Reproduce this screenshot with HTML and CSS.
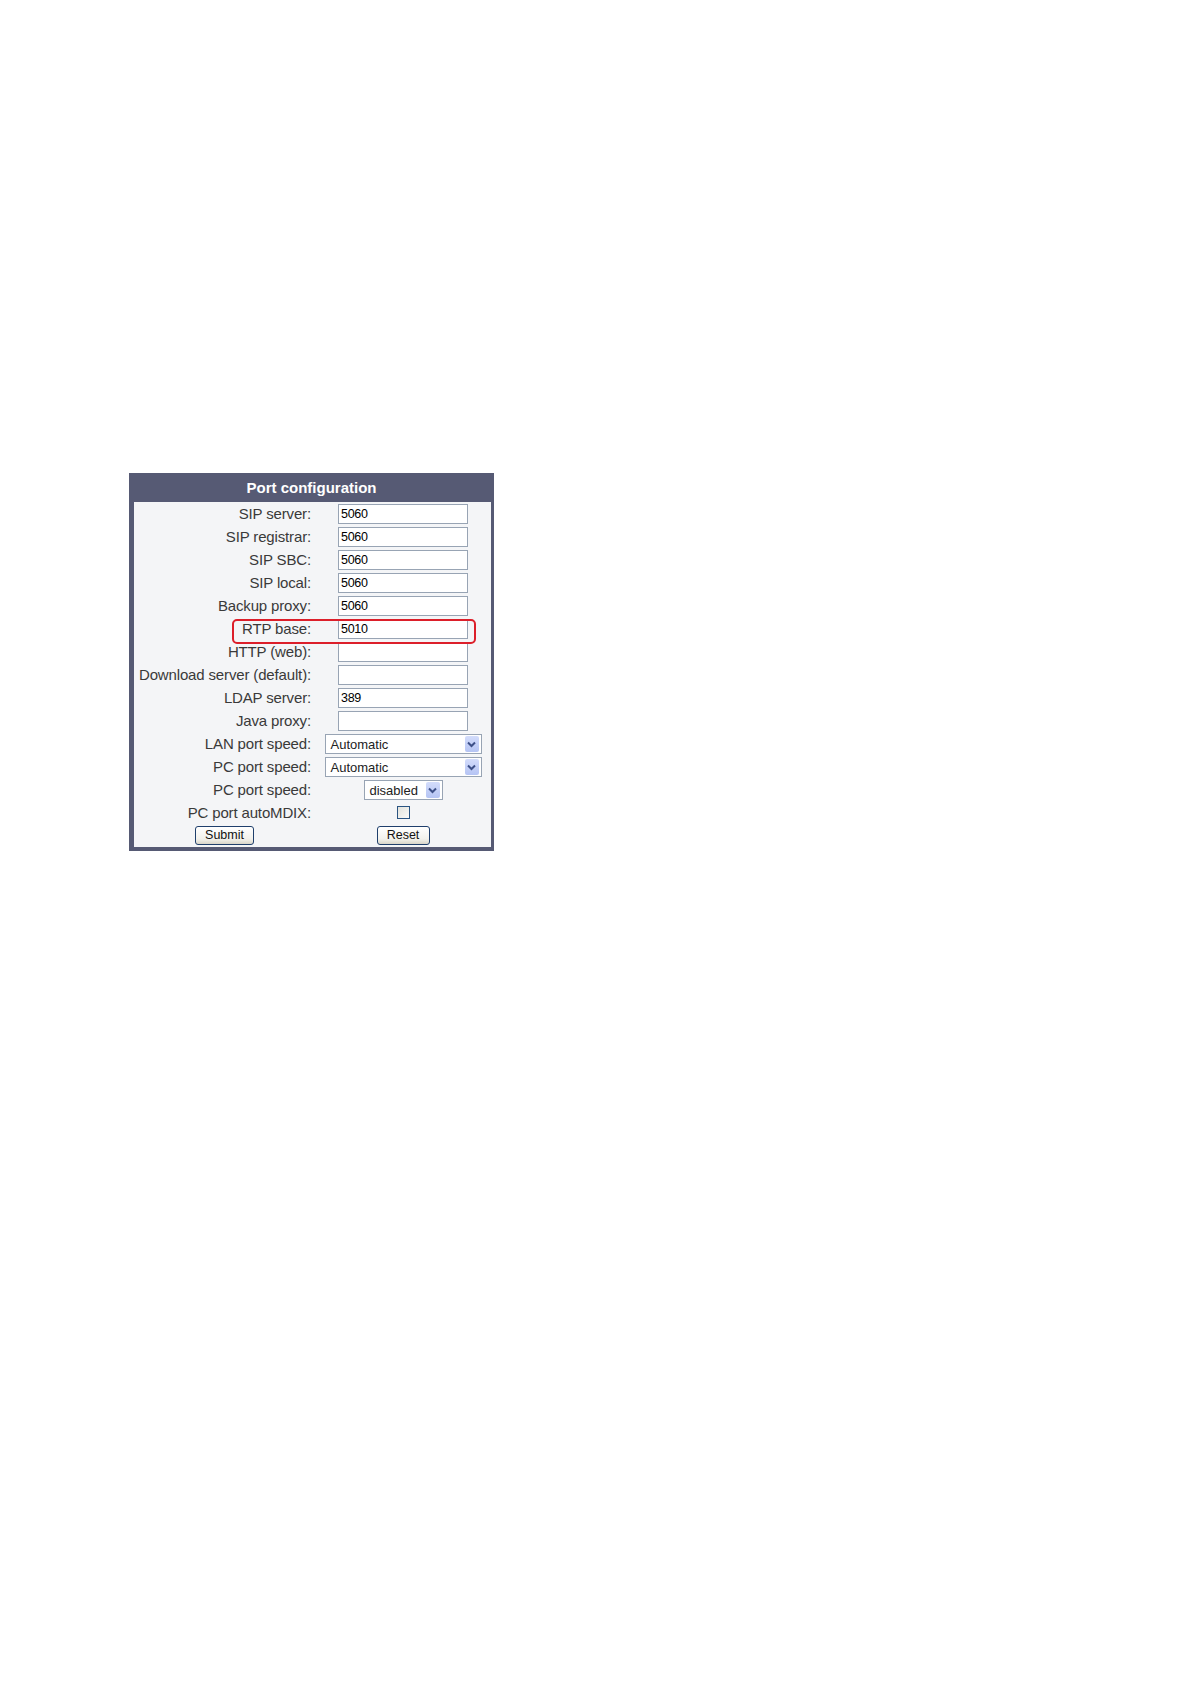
FILE: index.html
```html
<!DOCTYPE html>
<html>
<head>
<meta charset="utf-8">
<title>Port configuration</title>
<link rel="stylesheet" href="styles.css">
</head>
<body>
<div class="page">
  <div class="panel">
    <div class="title">Port configuration</div>
    <div class="form">
      <div class="lbl">SIP server:</div><div class="val"><div class="field"><span>5060</span></div></div>
      <div class="lbl">SIP registrar:</div><div class="val"><div class="field"><span>5060</span></div></div>
      <div class="lbl">SIP SBC:</div><div class="val"><div class="field"><span>5060</span></div></div>
      <div class="lbl">SIP local:</div><div class="val"><div class="field"><span>5060</span></div></div>
      <div class="lbl">Backup proxy:</div><div class="val"><div class="field"><span>5060</span></div></div>
      <div class="lbl">RTP base:</div><div class="val"><div class="field"><span>5010</span></div></div>
      <div class="lbl">HTTP (web):</div><div class="val"><div class="field"></div></div>
      <div class="lbl">Download server (default):</div><div class="val"><div class="field"></div></div>
      <div class="lbl">LDAP server:</div><div class="val"><div class="field"><span>389</span></div></div>
      <div class="lbl">Java proxy:</div><div class="val"><div class="field"></div></div>
      <div class="lbl">LAN port speed:</div><div class="val"><div class="select wide"><span>Automatic</span><i class="arrow"><svg width="9" height="7" viewBox="0 0 9 7"><path d="M1 1.5 L4.5 5 L8 1.5" fill="none" stroke="#3d5088" stroke-width="2"/></svg></i></div></div>
      <div class="lbl">PC port speed:</div><div class="val"><div class="select wide"><span>Automatic</span><i class="arrow"><svg width="9" height="7" viewBox="0 0 9 7"><path d="M1 1.5 L4.5 5 L8 1.5" fill="none" stroke="#3d5088" stroke-width="2"/></svg></i></div></div>
      <div class="lbl">PC port speed:</div><div class="val"><div class="select narrow"><span>disabled</span><i class="arrow"><svg width="9" height="7" viewBox="0 0 9 7"><path d="M1 1.5 L4.5 5 L8 1.5" fill="none" stroke="#3d5088" stroke-width="2"/></svg></i></div></div>
      <div class="lbl short">PC port autoMDIX:</div><div class="val short"><div class="check"></div></div>
      <div class="btncell"><div class="btn submit">Submit</div></div><div class="btncell"><div class="btn reset">Reset</div></div>
    </div>
    <div class="highlight"></div>
  </div>
</div>
</body>
</html>
```
FILE: styles.css
```css
html, body {
  margin: 0;
  padding: 0;
  background: #ffffff;
}
.page {
  padding: 473px 0 0 129px;
  height: 1211px;
}
.panel {
  position: relative;
  width: 357px;
  border-left: 5px solid #565a74;
  border-right: 3px solid #565a74;
  border-bottom: 4px solid #565a74;
  background: #f4f5f7;
  font-family: "Liberation Sans", Arial, sans-serif;
}
.title {
  height: 29px;
  background: #565a74;
  color: #ffffff;
  font-weight: bold;
  font-size: 15px;
  line-height: 30px;
  text-align: center;
  margin-left: -5px;
  margin-right: -3px;
}
.form {
  display: grid;
  grid-template-columns: 181px 176px;
  row-gap: 3px;
  padding: 2px 0 2px 0;
}
.lbl {
  height: 20px;
  line-height: 20px;
  text-align: right;
  padding-right: 4px;
  font-size: 15px;
  letter-spacing: -0.15px;
  color: #3a3a3a;
  white-space: nowrap;
}
.val {
  height: 20px;
  display: flex;
  align-items: center;
  justify-content: center;
}
.short {
  height: 19px;
  line-height: 19px;
}
.field {
  box-sizing: border-box;
  width: 130px;
  height: 20px;
  border: 1px solid #98a4b4;
  background: #ffffff;
  padding-left: 2px;
  font-size: 12.5px;
  letter-spacing: -0.3px;
  line-height: 18px;
  color: #000000;
}
.select {
  box-sizing: border-box;
  height: 20px;
  border: 1px solid #98a4b4;
  background: #ffffff;
  display: flex;
  align-items: center;
  justify-content: space-between;
  padding: 0 2px 0 5px;
  font-size: 13px;
  color: #222222;
}
.select.wide {
  width: 157px;
}
.select.narrow {
  width: 79px;
}
.arrow {
  width: 14px;
  height: 16px;
  background: linear-gradient(#d3dcfb, #b5c4f4);
  border-radius: 2px;
  display: flex;
  align-items: center;
  justify-content: center;
}
.check {
  box-sizing: border-box;
  width: 13px;
  height: 13px;
  border: 1px solid #2a5482;
  background: linear-gradient(135deg, #e2e2dc, #fbfbf9);
}
.btncell {
  height: 20px;
  display: flex;
  align-items: center;
  justify-content: center;
}
.btn {
  box-sizing: border-box;
  height: 19px;
  border: 1px solid #1f3f6c;
  border-radius: 3px;
  background: linear-gradient(#ffffff, #f2f1ec 70%, #d9d5c9);
  font-size: 12.5px;
  line-height: 17px;
  text-align: center;
  color: #111111;
}
.submit {
  width: 59px;
}
.reset {
  width: 53px;
}
.highlight {
  position: absolute;
  left: 98px;
  top: 146px;
  width: 244px;
  height: 25px;
  box-sizing: border-box;
  border: 2px solid #dc1f2a;
  border-radius: 5px;
}
```
